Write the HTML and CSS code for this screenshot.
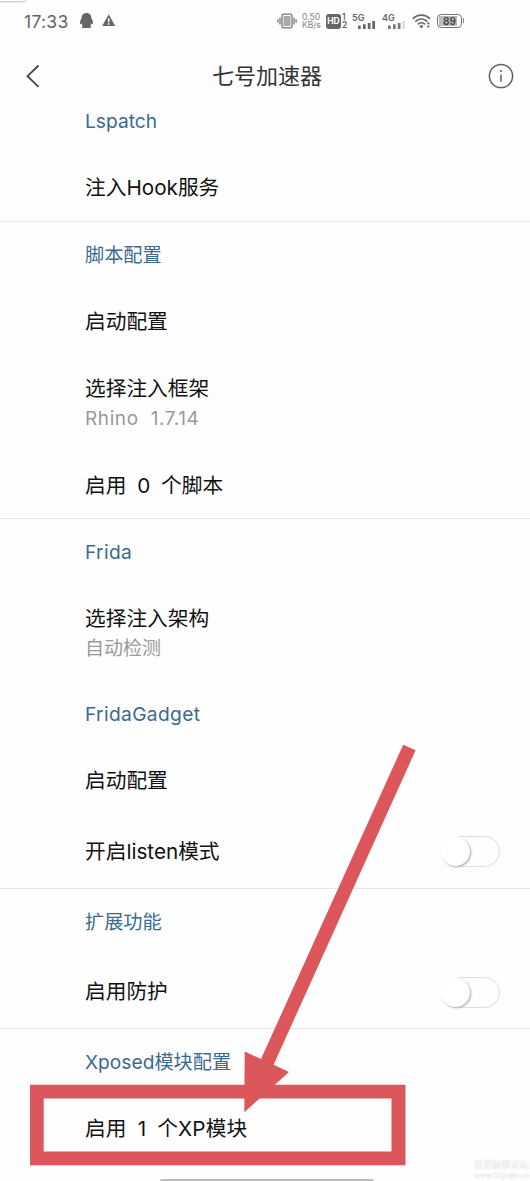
FILE: index.html
```html
<!DOCTYPE html>
<html lang="zh-CN">
<head>
<meta charset="utf-8">
<title>七号加速器</title>
<link rel="stylesheet" href="styles.css">
</head>
<body>
<div class="screen">
  <div class="corner-shadow"></div>
  <div class="status">
    <span class="clock">17:33</span>
    <svg class="status-left" width="38" height="18" viewBox="0 0 38 18" fill="#666">
      <path d="M7.500 1C4.300 1 2.600 3.200 2.600 6.200 1.300 8.200.7 10.100 1 11.800c.2.500 1 .2 1.600-.5.2 1.400.5 2.200 1 2.900-.8.500-.8 1.600 0 1.700h7.800c.8-.1.8-1.200 0-1.700.5-.7.8-1.500 1-2.900.6.700 1.400 1 1.600.5.300-1.700-.3-3.600-1.600-5.600C12.400 3.200 10.700 1 7.500 1Z"/>
      <path fill-rule="evenodd" d="M29.700 2.200 36.200 14H23.200ZM28.900 6.300v3.900h1.600V6.300ZM28.900 11.300v1.500h1.600v-1.500Z"/>
    </svg>
    <svg class="vibrate" width="20" height="16" viewBox="0 0 20 16" fill="none" stroke="#777" stroke-width="1.300">
      <rect x="5" y="1.200" width="10" height="13.600" rx="2"/>
      <rect x="6.500" y="3" width="7" height="10" fill="#aaa" stroke="none"/>
      <path d="M3 4.500v7M.9 6.300v3.400M17 4.500v7M19.100 6.300v3.400"/>
    </svg>
    <span class="speed"><span>0.50</span><span>KB/s</span></span>
    <span class="hd">HD</span>
    <span class="sims"><span>1</span><span>2</span></span>
    <span class="net">5G<svg width="19" height="9" viewBox="0 0 19 9" fill="#666"><path d="M1 5.500h2.700V9H1ZM6 4.300h2.700V9H6ZM10.800 3h2.700v6h-2.700ZM15.300 1H18v8h-2.700Z"/></svg></span>
    <span class="net net-4g">4G<svg width="19" height="9" viewBox="0 0 19 9" fill="#777"><path d="M1 5.500h2.700V9H1ZM6 4.300h2.700V9H6ZM10.800 3h2.700v6h-2.700Z"/><path fill="#ddd" d="M15.300 1H18v8h-2.700Z"/></svg></span>
    <svg class="wifi" width="19" height="15" viewBox="0 0 19 15" fill="none" stroke="#666" stroke-width="1.700">
      <path d="M.8 4.800c4.800-4.900 12.400-4.900 17.200 0M3.300 7.600c3.500-3.500 8.700-3.500 12.200 0M5.800 10.300c2.100-2 5.100-2 7.200 0"/>
      <path fill="#666" stroke="none" d="m7.300 12 2.100 2.600 2.100-2.600c-1.200-.9-3-.9-4.200 0ZM16.300 7.900l1.700 2.400h-3.400ZM14.600 11.700H18l-1.700 2.400Z"/>
    </svg>
    <span class="battery"><span class="charge">89</span></span>
  </div>
  <header class="bar">
    <svg width="14" height="24" viewBox="0 0 14 24" fill="none" stroke="#444" stroke-width="1.800"><path d="M12.500 1.500 1.500 12.200l11 10.700"/></svg>
    <h1 class="title">七号加速器</h1>
    <svg width="26" height="26" viewBox="0 0 26 26" fill="none" stroke="#606060" stroke-width="1.500"><circle cx="13" cy="13" r="11.600"/><path d="M13 11.500v7.300"/><circle cx="13" cy="8" r="1.100" fill="#606060" stroke="none"/></svg>
  </header>

  <section class="group">
    <h2 class="label">Lspatch</h2>
    <div class="row">注入Hook服务</div>
  </section>
  <section class="group scripts">
    <h2 class="label">脚本配置</h2>
    <div class="row">启动配置</div>
    <div class="row double"><span>选择注入框架</span><span class="sub rhino">Rhino 1.7.14</span></div>
    <div class="row count">启用 0 个脚本</div>
  </section>
  <section class="group unlined">
    <h2 class="label frida">Frida</h2>
    <div class="row double frida-arch"><span>选择注入架构</span><span class="sub">自动检测</span></div>
  </section>
  <section class="group">
    <h2 class="label frida">FridaGadget</h2>
    <div class="row">启动配置</div>
    <div class="row tall listen"><span>开启listen模式</span><span class="switch"></span></div>
  </section>
  <section class="group">
    <h2 class="label">扩展功能</h2>
    <div class="row tall guard"><span>启用防护</span><span class="switch"></span></div>
  </section>
  <section class="group unlined">
    <h2 class="label">Xposed模块配置</h2>
    <div class="row count modules">启用 1 个XP模块</div>
  </section>

  <svg class="annotation" width="530" height="1181" viewBox="0 0 530 1181" fill="#db575c">
    <path fill-rule="evenodd" d="M30 1084.700H405.500V1165.200H30ZM43.700 1098.500V1151.500H391.500V1098.500Z"/>
    <path d="M403.200 744.700 415.600 750.300 273.600 1064.800 289 1072 244.300 1112.200 244.700 1051.500 261 1059Z"/>
  </svg>
  <div class="watermark"><span>吾爱破解论坛</span><span class="url">www.52pojie.cn</span></div>
  <div class="home-bar"></div>
</div>
</body>
</html>
```
FILE: styles.css
```css
* { box-sizing: border-box; }
body { margin: 0; background: #fefefe; }
.screen {
  position: relative;
  width: 530px;
  height: 1181px;
  overflow: hidden;
  background: #fefefe;
  color: #111;
  font-family: Inter, "Noto Sans CJK SC", sans-serif;
}
.corner-shadow {
  position: absolute;
  top: -5px;
  left: -6px;
  width: 32px;
  height: 6px;
  border-radius: 4px;
  box-shadow: 0 0 3px #777;
}
.status {
  display: flex;
  align-items: center;
  height: 42px;
  padding-left: 24px;
  color: #666;
}
.clock { width: 55px; font-size: 17.500px; letter-spacing: 0.300px; }
.vibrate { margin-left: 160px; }
.speed {
  display: flex;
  flex-direction: column;
  width: 20px;
  margin-left: 5px;
  font-size: 8.500px;
  line-height: 8px;
  color: #888;
  white-space: nowrap;
}
.hd {
  width: 15px;
  height: 15px;
  margin-left: 4px;
  border-radius: 3px;
  background: #666;
  color: #fff;
  font-size: 8.500px;
  font-weight: 700;
  line-height: 15px;
  text-align: center;
}
.sims {
  display: flex;
  flex-direction: column;
  margin-left: 1px;
  width: 6px;
  font-size: 8.500px;
  font-weight: 600;
  line-height: 8px;
}
.net {
  display: flex;
  flex-direction: column;
  width: 25px;
  height: 15px;
  margin-left: 4px;
  font-size: 9px;
  font-weight: 600;
  line-height: 7px;
}
.net svg { margin: -1px 0 0 5px; flex: none; }
.net-4g { margin-left: 5px; }
.wifi { margin-left: 5px; }
.battery {
  position: relative;
  width: 25px;
  height: 14px;
  margin-left: 6px;
  padding: 1px;
  border: 1.500px solid #777;
  border-radius: 4px;
}
.battery::after {
  content: "";
  position: absolute;
  right: -3px;
  top: 3px;
  width: 1.500px;
  height: 5px;
  background: #888;
}
.charge {
  display: block;
  height: 10px;
  background: linear-gradient(90deg, #bbb 86%, transparent 86%);
  color: #444;
  font-size: 10px;
  font-weight: 600;
  line-height: 10px;
  text-align: center;
}
.bar {
  display: flex;
  align-items: center;
  justify-content: space-between;
  height: 46px;
  padding: 21px 16px 0 26px;
}
.title { margin: 0; padding: 1px 0 0 6px; font-size: 22px; font-weight: 400; line-height: 25px; color: #333; }
.group { border-bottom: 1px solid #e4e4e4; }
.group.unlined { border-bottom: 0; }
.label {
  height: 66px;
  margin: 0;
  padding-left: 85px;
  font-size: 19.200px;
  font-weight: 400;
  line-height: 67px;
  color: #3b6a91;
}
.frida { letter-spacing: 0.350px; }
.row {
  display: flex;
  align-items: center;
  justify-content: space-between;
  height: 67px;
  padding: 1px 30px 0 85px;
  font-size: 20.700px;
  line-height: 30px;
}
.count { white-space: pre; word-spacing: 5px; }
.modules { letter-spacing: 0.150px; }
.double { flex-direction: column; align-items: flex-start; justify-content: center; height: 97px; }
.scripts .row:last-child { height: 66px; padding-top: 2px; }
.frida-arch { height: 96px; }
.sub { font-size: 19px; color: #999; }
.rhino { letter-spacing: 0.600px; word-spacing: 6px; }
.listen { height: 74px; }
.guard { height: 73px; }
.switch {
  position: relative;
  width: 58px;
  height: 31px;
  border: 1px solid #ddd;
  border-radius: 16px;
}
.switch::before {
  content: "";
  position: absolute;
  left: -3px;
  top: -1px;
  width: 19px;
  height: 31px;
  background: #fefefe;
}
.switch::after {
  content: "";
  position: absolute;
  left: -2px;
  top: 0;
  width: 29px;
  height: 29px;
  border-radius: 50%;
  background: #fff;
  box-shadow: 1px 1px 2px #aaa;
  clip-path: polygon(15% 0, 130% 0, 130% 130%, 0 130%, 0 50%);
}
.annotation { position: absolute; left: 0; top: 0; }
.watermark {
  position: absolute;
  right: 0;
  bottom: 0;
  display: flex;
  flex-direction: column;
  width: 56px;
  color: #fefefe;
  font-size: 9.200px;
  line-height: 11px;
  text-shadow: 0 0 1px #bbb;
  white-space: nowrap;
}
.url { font-size: 7.300px; }
.home-bar {
  position: absolute;
  left: 160px;
  bottom: 0;
  width: 214px;
  height: 2px;
  border-radius: 2px 2px 0 0;
  background: #bbb;
}
```
